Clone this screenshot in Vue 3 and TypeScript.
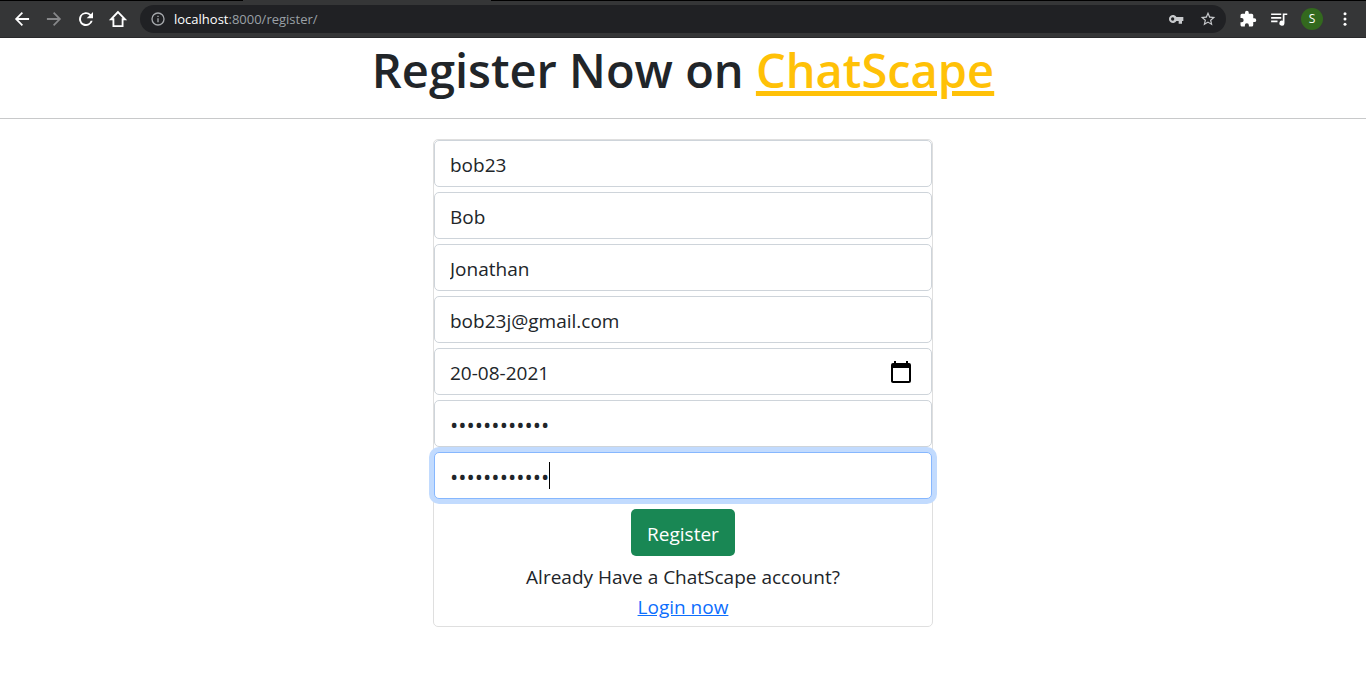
<script setup lang="ts">
import { ref } from 'vue'

interface Field {
  name: string
  label: string
  type: 'text' | 'email' | 'password'
  value: string
  picker?: boolean
  active?: boolean
}

const address = ref('localhost:8000/register/')

const fields = ref<Field[]>([
  { name: 'username', label: 'Username', type: 'text', value: 'bob23' },
  { name: 'first-name', label: 'First name', type: 'text', value: 'Bob' },
  { name: 'last-name', label: 'Last name', type: 'text', value: 'Jonathan' },
  { name: 'email', label: 'Email', type: 'email', value: 'bob23j@gmail.com' },
  { name: 'birthday', label: 'Date of birth', type: 'text', value: '20-08-2021', picker: true },
  { name: 'password', label: 'Password', type: 'password', value: 'chatscape-23' },
  { name: 'confirm', label: 'Confirm password', type: 'password', value: 'chatscape-23', active: true },
])
</script>

<template>
  <div class="page">
    <header class="browser">
      <div class="tabs"><span class="tab"></span></div>
      <nav class="toolbar" aria-label="Browser">
        <div class="nav-buttons">
          <button type="button" class="tool" aria-label="Back">
            <svg viewBox="0 0 24 24"><path d="M20.500 10.800H7.600l5.600-5.600L11.700 3.700 3.500 12l8.200 8.300 1.500-1.500-5.600-5.600h12.900z" /></svg>
          </button>
          <button type="button" class="tool dim" aria-label="Forward">
            <svg viewBox="0 0 24 24"><path d="M3.500 10.800h12.900l-5.600-5.600 1.500-1.500 8.200 8.300-8.200 8.300-1.500-1.500 5.600-5.600H3.500z" /></svg>
          </button>
          <button type="button" class="tool" aria-label="Reload">
            <svg viewBox="0 0 24 24"><path d="M17.800 6.200A8.300 8.300 0 1 0 20 14.200h-2.400A6 6 0 1 1 12 6c1.660 0 3.140.69 4.220 1.780L12.800 11.200h7.600V3.600z" /></svg>
          </button>
          <button type="button" class="tool" aria-label="Home">
            <svg viewBox="0 0 24 24"><path fill="none" stroke="currentColor" stroke-width="2.2" d="M12 3.600 3.600 12.300H6.500v8.200h11v-8.200h2.900z" /></svg>
          </button>
        </div>
        <div class="omnibox">
          <svg class="info" viewBox="0 0 24 24"><path d="M11 17h2v-6h-2zm0-8h2V7h-2zm1-7a10 10 0 1 0 0 20 10 10 0 0 0 0-20zm0 18a8 8 0 1 1 0-16 8 8 0 0 1 0 16z" /></svg>
          <a class="address" href="#"><b>{{ address.split(':')[0] }}</b>:{{ address.split(':')[1] }}</a>
          <button type="button" class="tool soft" aria-label="Saved passwords">
            <svg viewBox="0 0 24 24"><path fill-rule="evenodd" d="M12.650 9A6 6 0 1 0 12.650 15H16v4h5v-4h2V9zM7 14.500a2.500 2.500 0 1 1 0-5 2.500 2.500 0 0 1 0 5z" /></svg>
          </button>
          <button type="button" class="tool soft" aria-label="Bookmark">
            <svg viewBox="1 1 22 22"><path d="m22 9.240-7.190-.62L12 2 9.190 8.630 2 9.240l5.460 4.730L5.820 21 12 17.270 18.180 21l-1.630-7.030zM12 15.400l-3.760 2.270 1-4.280-3.320-2.880 4.380-.38L12 6.100l1.710 4.040 4.380.38-3.320 2.880 1 4.280z" /></svg>
          </button>
        </div>
        <div class="extras">
          <button type="button" class="tool" aria-label="Extensions">
            <svg viewBox="0 0 24 24"><path d="M20.500 11H19V7a2 2 0 0 0-2-2h-4V3.500a2.500 2.500 0 0 0-5 0V5H4a2 2 0 0 0-2 2v3.800h1.500a2.700 2.700 0 0 1 0 5.400H2V20c0 1.100.9 2 2 2h3.800v-1.500a2.700 2.700 0 0 1 5.400 0V22H17a2 2 0 0 0 2-2v-4h1.500a2.500 2.500 0 0 0 0-5z" /></svg>
          </button>
          <button type="button" class="tool" aria-label="Media">
            <svg viewBox="0 0 24 24"><path d="M1.500 4.500H15v2.200H1.500zm0 4.800H15v2.200H1.500zm0 4.800H10v2.200H1.500zM17 4.500h6v2.200h-3.700v10.800a3.400 3.400 0 1 1-2.300-3.200z" /></svg>
          </button>
          <button type="button" class="avatar" aria-label="Profile">S</button>
          <button type="button" class="tool" aria-label="Menu">
            <svg viewBox="0 0 24 24"><circle cx="12" cy="5" r="2" /><circle cx="12" cy="12" r="2" /><circle cx="12" cy="19" r="2" /></svg>
          </button>
        </div>
      </nav>
    </header>

    <main>
      <h1>Register Now on <a href="#">ChatScape</a></h1>
      <hr />
      <form class="card" @submit.prevent>
        <div v-for="field in fields" :key="field.name" class="field">
          <input
            :id="field.name"
            v-model="field.value"
            :type="field.type"
            :name="field.name"
            :aria-label="field.label"
            :class="{ active: field.active }"
            autocomplete="off"
            spellcheck="false"
          />
          <button v-if="field.picker" type="button" class="picker" aria-label="Open calendar">
            <svg viewBox="0 0 24 24"><path d="M20 3h-1V1h-2v2H7V1H5v2H4a2 2 0 0 0-2 2v16c0 1.100.9 2 2 2h16a2 2 0 0 0 2-2V5a2 2 0 0 0-2-2zm0 18H4V8h16z" /></svg>
          </button>
          <span v-if="field.active" class="caret"></span>
        </div>
        <button type="submit" class="submit">Register</button>
        <p>Already Have a ChatScape account?</p>
        <p><a href="#">Login now</a></p>
      </form>
    </main>
  </div>
</template>

<style>
body {
  margin: 0;
  background: #fff;
}
</style>

<style scoped>
.page {
  font-family: "Open Sans", "Noto Sans", sans-serif;
  font-size: 19px;
  line-height: 30px;
  color: #212529;
}
button {
  font: inherit;
  border: 0;
  padding: 0;
  cursor: pointer;
}
.browser {
  background: #353637;
  border-bottom: 1px solid #29292b;
}
.tabs {
  height: 1px;
  background: #000;
}
.tab {
  display: block;
  width: 248px;
  height: 1px;
  margin-left: 243px;
  background: #353637;
}
.toolbar {
  display: flex;
  align-items: center;
  height: 36px;
  padding: 0 12px;
}
.nav-buttons,
.extras {
  display: flex;
  align-items: center;
  gap: 12px;
}
.tool {
  display: flex;
  background: none;
  color: #fff;
}
.tool svg {
  width: 20px;
  height: 20px;
  fill: currentColor;
}
.tool.dim {
  color: #87888a;
}
.tool.soft {
  color: #c8cacd;
}
.tool.soft svg {
  width: 16px;
  height: 16px;
}
.omnibox {
  flex: 1;
  display: flex;
  align-items: center;
  gap: 16px;
  height: 28px;
  margin: 0 13px 0 12px;
  padding: 0 10px;
  border-radius: 14px;
  background: #202124;
}
.info {
  width: 16px;
  height: 16px;
  margin-right: -8px;
  fill: #a5a8ac;
}
.address {
  flex: 1;
  font-size: 13px;
  color: #9aa0a6;
  text-decoration: none;
}
.address b {
  font-weight: 500;
  color: #fff;
}
.extras .tool svg {
  width: 18px;
  height: 18px;
}
.extras {
  gap: 13px;
}
.avatar {
  width: 22px;
  height: 22px;
  border-radius: 50%;
  background: #33691e;
  color: #fff;
  font-size: 12px;
  line-height: 22px;
}
h1 {
  margin: 0;
  padding: 2px 0 18px;
  font-size: 47px;
  font-weight: 600;
  line-height: 60px;
  text-align: center;
}
h1 a {
  color: #ffc107;
  text-decoration-thickness: 5px;
}
hr {
  margin: 0 0 20px;
  border: 0;
  border-top: 1px solid #c8c9ca;
}
.card {
  display: flex;
  flex-direction: column;
  align-items: center;
  box-sizing: border-box;
  max-width: 500px;
  margin: 0 auto;
  padding-bottom: 4px;
  border: 1px solid #dfdfdf;
  border-radius: 5px;
}
.field {
  position: relative;
  width: 100%;
  margin-bottom: 5px;
}
.field input {
  display: block;
  box-sizing: border-box;
  width: 100%;
  height: 47px;
  padding: 2px 15px 0;
  border: 1px solid #ced4da;
  border-radius: 5px;
  outline: 0;
  background: #fff;
  font: inherit;
  color: inherit;
}
.field input[type="password"] {
  padding-top: 0;
  font-size: 22px;
}
.field input.active {
  border-color: #86b7fe;
  box-shadow: 0 0 0 5px #c2dbfe;
}
.picker {
  position: absolute;
  top: 12px;
  right: 19px;
  display: flex;
  background: none;
}
.picker svg {
  width: 24px;
  height: 24px;
}
.caret {
  position: absolute;
  top: 10px;
  left: 115px;
  width: 1px;
  height: 27px;
  background: #000;
}
.submit {
  height: 47px;
  margin: 5px 0 6px;
  padding: 2px 16px 0;
  border-radius: 5px;
  background: #198754;
  color: #fff;
}
p {
  margin: 0;
}
p a {
  color: #0d6efd;
}
</style>
